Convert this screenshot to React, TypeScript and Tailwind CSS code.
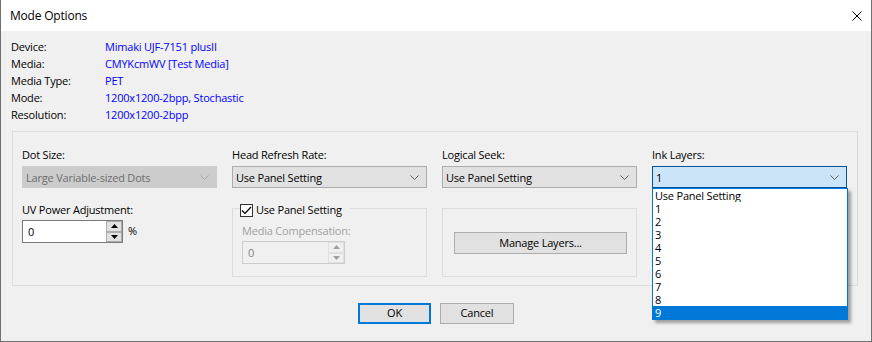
import React from "react";

function Chevron({ color = "#606060" }: { color?: string }) {
  return (
    <svg width="9" height="5" viewBox="0 0 9 5" className="shrink-0">
      <path d="M0.5 0.5 L4.5 4.5 L8.5 0.5" fill="none" stroke={color} strokeWidth="1" />
    </svg>
  );
}

function Combo({ text, variant }: { text: string; variant: "normal" | "disabled" | "focus" }) {
  const cls =
    variant === "disabled"
      ? "bg-[#cccccc] border-[#cccccc] text-[#6d6d6d]"
      : variant === "focus"
      ? "bg-[#cce4f7] border-[#005499] text-black"
      : "bg-[#e1e1e1] border-[#adadad] text-black";
  return (
    <div className={`mt-[4px] h-[22px] w-[195px] border flex items-center justify-between pl-[3px] pr-[7px] ${cls}`}>
      <span className="leading-[15px]">{text}</span>
      <Chevron color={variant === "disabled" ? "#a8a8a8" : "#606060"} />
    </div>
  );
}

function Tri({ up, color }: { up: boolean; color: string }) {
  return (
    <svg width="7" height="4" viewBox="0 0 7 4">
      {up ? <path d="M0 4 L3.5 0 L7 4 Z" fill={color} /> : <path d="M0 0 L3.5 4 L7 0 Z" fill={color} />}
    </svg>
  );
}

function Spin({ value, disabled, width }: { value: string; disabled?: boolean; width: string }) {
  return (
    <div
      className={`h-[23px] ${width} border flex ${
        disabled ? "border-[#cccccc] bg-[#f0f0f0] text-[#838383]" : "border-[#7a7a7a] bg-white text-black"
      }`}
    >
      <div className="flex-1 flex items-center pl-[5px] leading-[15px]">{value}</div>
      <div className="w-[16px] flex flex-col">
        <div
          className={`flex-1 flex items-center justify-center border ${
            disabled ? "border-[#e0e0e0] bg-[#f0f0f0]" : "border-[#adadad] bg-[#e1e1e1]"
          }`}
        >
          <Tri up color={disabled ? "#a0a0a0" : "#000"} />
        </div>
        <div
          className={`flex-1 flex items-center justify-center border ${
            disabled ? "border-[#e0e0e0] bg-[#f0f0f0]" : "border-[#adadad] bg-[#e1e1e1]"
          }`}
        >
          <Tri up={false} color={disabled ? "#a0a0a0" : "#000"} />
        </div>
      </div>
    </div>
  );
}

function Label({ children, className = "" }: { children: React.ReactNode; className?: string }) {
  return <div className={`h-[15px] leading-[15px] whitespace-nowrap ${className}`}>{children}</div>;
}

export default function App() {
  const info: [string, React.ReactNode][] = [
    ["Device:", "Mimaki UJF-7151 plusII"],
    ["Media:", "CMYKcmWV [Test Media]"],
    ["Media Type:", "PET"],
    ["Mode:", "1200x1200-2bpp, Stochastic"],
    ["Resolution:", "1200x1200-2bpp"],
  ];
  const items = ["Use Panel Setting", "1", "2", "3", "4", "5", "6", "7", "8", "9"];
  return (
    <div className="w-[872px] h-[342px] border-x border-b border-[#707070] bg-[#f0f0f0] flex flex-col font-['Open_Sans',sans-serif] text-[11px] tracking-[-0.2px] text-black overflow-hidden">
      <div className="h-[31px] bg-white flex items-center justify-between pl-[9px] pr-[9px] shrink-0">
        <span className="text-[12px] leading-[16px]">Mode Options</span>
        <svg width="10" height="10" viewBox="0 0 10 10">
          <path d="M0.5 0.5 L9.5 9.5 M9.5 0.5 L0.5 9.5" stroke="#000" strokeWidth="1" />
        </svg>
      </div>

      <div className="pt-[7px] pl-[10px] flex flex-col">
        {info.map(([k, v]) => (
          <div key={k} className="flex h-[17px] leading-[17px]">
            <div className="w-[94px]">{k}</div>
            <div className="text-[#0000ff] whitespace-nowrap">{v}</div>
          </div>
        ))}
      </div>

      <div className="ml-[11px] mt-[8px] w-[846px] h-[155px] border border-[#dcdcdc] pt-[15px] pl-[9px] flex gap-[15px] shrink-0">
        {/* Column 1 */}
        <div className="w-[195px] flex flex-col">
          <Label>Dot Size:</Label>
          <Combo text="Large Variable-sized Dots" variant="disabled" />
          <Label className="mt-[14px]">UV Power Adjustment:</Label>
          <div className="mt-[3px] flex items-center">
            <Spin value="0" width="w-[101px]" />
            <span className="ml-[5px]">%</span>
          </div>
        </div>

        {/* Column 2 */}
        <div className="w-[195px] flex flex-col">
          <Label>Head Refresh Rate:</Label>
          <Combo text="Use Panel Setting" variant="normal" />
          <div className="mt-[20px] h-[69px] border border-[#dcdcdc] flex flex-col">
            <div className="-mt-[6px] ml-[7px] self-start h-[14px] flex items-center bg-[#f0f0f0] pr-[8px]">
              <div className="w-[13px] h-[13px] border border-[#333333] bg-white flex items-center justify-center">
                <svg width="11" height="9" viewBox="0 0 11 9">
                  <path d="M1 4.5 L4 7.5 L10 1" fill="none" stroke="#000" strokeWidth="1.2" />
                </svg>
              </div>
              <span className="ml-[3px] leading-[14px]">Use Panel Setting</span>
            </div>
            <Label className="mt-[6px] ml-[9px] text-[#a0a0a0]">Media Compensation:</Label>
            <div className="mt-[3px] ml-[9px]">
              <Spin value="0" disabled width="w-[103px]" />
            </div>
          </div>
        </div>

        {/* Column 3 */}
        <div className="w-[195px] flex flex-col">
          <Label>Logical Seek:</Label>
          <Combo text="Use Panel Setting" variant="normal" />
          <div className="mt-[20px] h-[69px] border border-[#dcdcdc] flex flex-col">
            <div className="mt-[23px] ml-[11px] w-[173px] h-[22px] border border-[#adadad] bg-[#e1e1e1] flex items-center justify-center">
              Manage Layers...
            </div>
          </div>
        </div>

        {/* Column 4 */}
        <div className="w-[195px] flex flex-col relative">
          <Label>Ink Layers:</Label>
          <Combo text="1" variant="focus" />
          <div className="mt-[20px] h-[69px] border border-[#dcdcdc]" />
          <div className="absolute left-0 top-[41px] w-[196px] border border-[#0078d7] bg-white shadow-[3px_3px_3px_rgba(0,0,0,0.35)] z-10">
            {items.map((it, i) => (
              <div
                key={it}
                className={`h-[13px] leading-[13px] pl-[2px] overflow-hidden ${
                  i === items.length - 1 ? "bg-[#0078d7] text-white" : "text-black"
                }`}
              >
                {it}
              </div>
            ))}
          </div>
        </div>
      </div>

      <div className="mt-[17px] flex justify-center gap-[9px]">
        <div className="w-[73px] h-[21px] border-2 border-[#0078d7] bg-[#e1e1e1] flex items-center justify-center">
          OK
        </div>
        <div className="w-[74px] h-[21px] border border-[#adadad] bg-[#e1e1e1] flex items-center justify-center">
          Cancel
        </div>
      </div>
    </div>
  );
}
